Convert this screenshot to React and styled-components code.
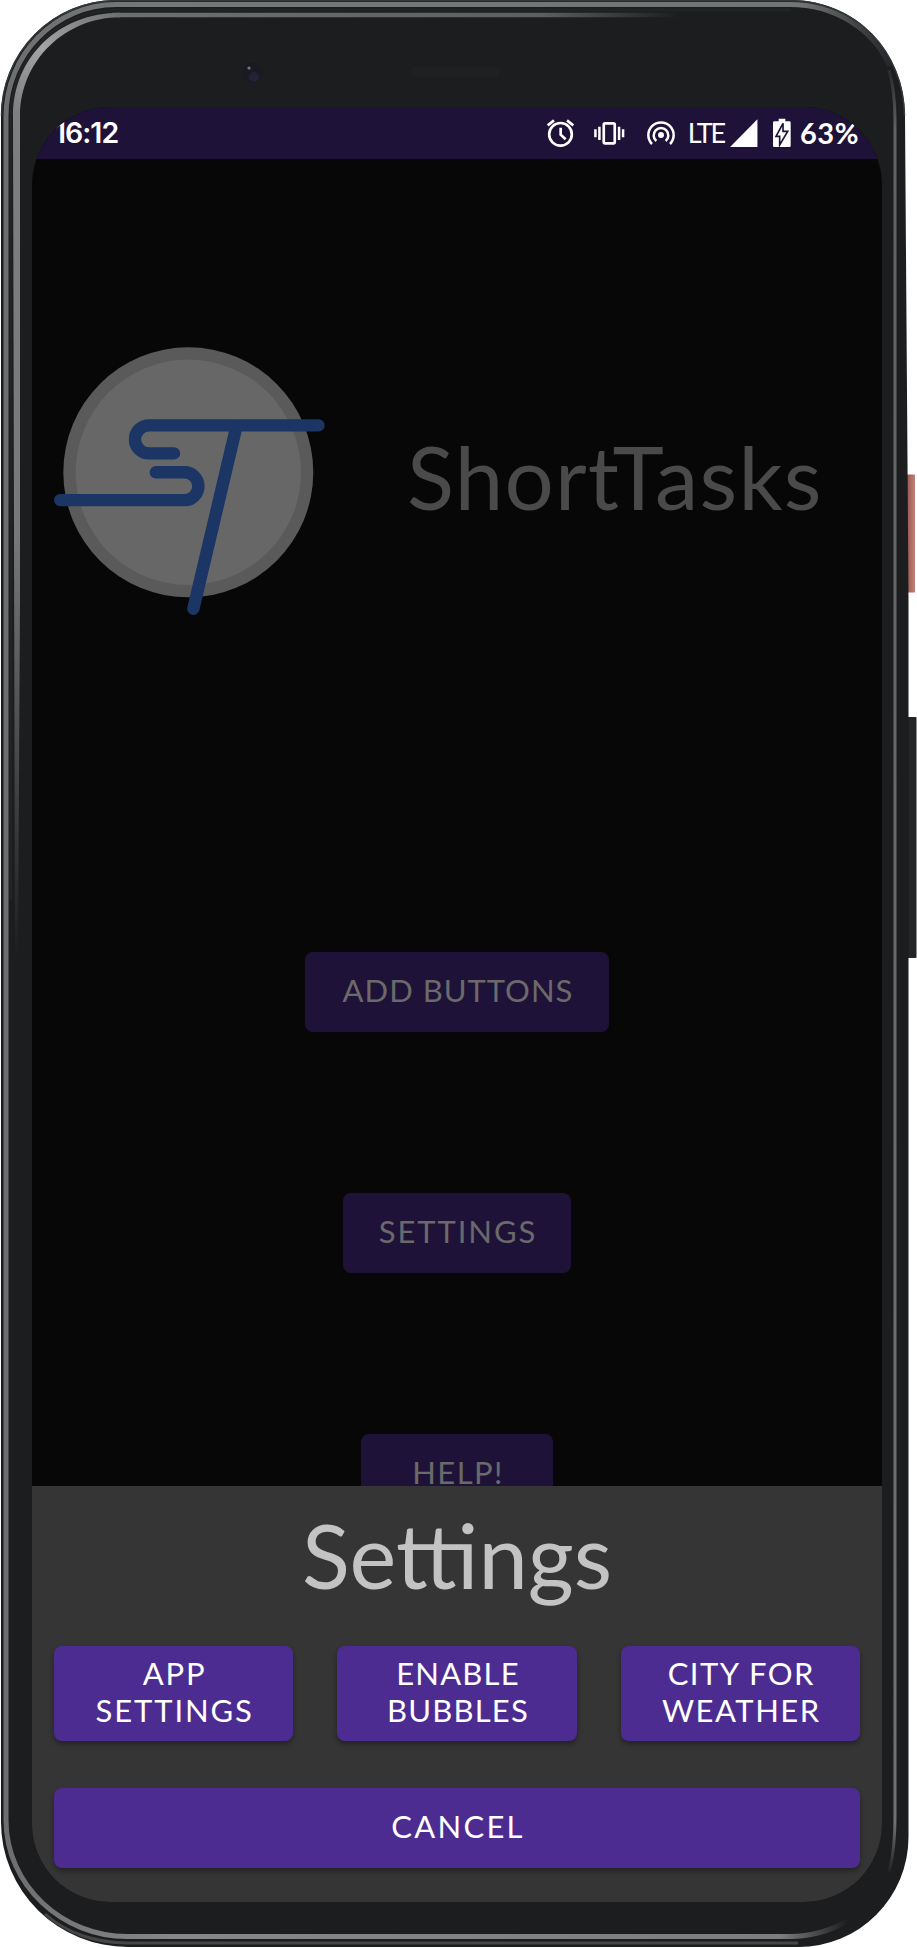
import React from "react";
import styled, { createGlobalStyle } from "styled-components";

const GlobalStyle = createGlobalStyle`
  * { box-sizing: border-box; }
  html, body { margin: 0; padding: 0; background: #ffffff; overflow: hidden; }
`;

const Device = styled.div`
  position: relative;
  width: 917px;
  height: 1948px;
  padding: 107px 35px 46px 32px;
  font-family: Lato, "Open Sans", sans-serif;
`;

const ShellArt = styled.svg`
  position: absolute;
  inset: 0;
  width: 917px;
  height: 1948px;
`;

const Screen = styled.div`
  position: relative;
  display: flex;
  flex-direction: column;
  width: 850px;
  height: 1795px;
  border-radius: 78px;
  overflow: hidden;
  background: #070707;
`;

const StatusBar = styled.header`
  display: flex;
  align-items: center;
  flex: 0 0 52px;
  padding: 0 23px 0 22px;
  background: #1f1238;
  color: #ffffff;
`;

const StatusText = styled.span`
  width: ${(p) => p.$width}px;
  margin-left: ${(p) => p.$gap || 0}px;
  font-size: ${(p) => p.$size || 29}px;
  font-weight: ${(p) => p.$weight || 700};
  letter-spacing: ${(p) => p.$spacing || 0}px;
  line-height: 52px;
  white-space: nowrap;
`;

const Clock = styled(StatusText)`
  font-family: Inter, sans-serif;
`;

const StatusIcons = styled.div`
  display: flex;
  align-items: center;
  margin-left: auto;
`;

const Glyph = styled.svg`
  display: block;
  height: 32px;
  width: ${(p) => p.$width}px;
  margin-left: ${(p) => p.$gap || 0}px;
`;

const Home = styled.main`
  display: flex;
  flex-direction: column;
  flex: 0 0 1327px;
  overflow: hidden;
`;

const Brand = styled.div`
  display: flex;
  align-items: flex-start;
  flex: none;
  height: 793px;
  padding: 188px 0 0 22px;
`;

const Logo = styled.svg`
  display: block;
  flex: none;
  width: 272px;
  height: 268px;
`;

const AppName = styled.h1`
  margin: 75px 0 0 81px;
  color: #4a4a4a;
  font-size: 87px;
  font-weight: 400;
  line-height: 110px;
  letter-spacing: 1.2px;
  white-space: nowrap;
`;

const HomeActions = styled.nav`
  display: flex;
  flex-direction: column;
  align-items: center;
  gap: 161px;
`;

const Button = styled.button`
  display: flex;
  align-items: center;
  justify-content: center;
  flex: none;
  width: ${(p) => p.$width || "100%"};
  height: ${(p) => p.$height || 80}px;
  padding: 0 0 3px 2px;
  border: 0;
  border-radius: 8px;
  background: ${(p) => (p.$dim ? "#1f1238" : "#4c2c91")};
  box-shadow: ${(p) => (p.$dim ? "none" : "0 3px 5px rgba(0, 0, 0, 0.36)")};
  color: ${(p) => (p.$dim ? "#6a6a6a" : "#ffffff")};
  font-family: inherit;
  font-size: 31px;
  font-weight: 400;
  line-height: 37px;
  letter-spacing: ${(p) => p.$spacing || 2.3}px;
  text-align: center;
  text-transform: uppercase;
`;

const Sheet = styled.section`
  display: flex;
  flex-direction: column;
  flex: 1;
  padding: 0 22px;
  background: #353535;
`;

const SheetTitle = styled.h2`
  height: 159.5px;
  margin: 0;
  padding-top: 14px;
  color: #c3c3c3;
  font-size: 88.5px;
  font-weight: 400;
  line-height: 110px;
  text-align: center;
`;

const SheetGrid = styled.div`
  display: grid;
  grid-template-columns: repeat(3, 1fr);
  column-gap: 44px;
  margin-bottom: 47.5px;
`;

function Shell() {
  return (
    <ShellArt viewBox="0 0 917 1948" fill="none">
      <defs>
        <linearGradient id="topInner" gradientUnits="userSpaceOnUse" x1="120" y1="0" x2="680" y2="0">
          <stop offset="0" stopColor="#6d6f70" />
          <stop offset="0.75" stopColor="#5d5f60" />
          <stop offset="1" stopColor="#1c1d1f" />
        </linearGradient>
        <linearGradient id="leftInner" gradientUnits="userSpaceOnUse" x1="0" y1="110" x2="0" y2="960">
          <stop offset="0" stopColor="#7d7f82" />
          <stop offset="0.5" stopColor="#77787a" />
          <stop offset="1" stopColor="#1c1d1f" />
        </linearGradient>
        <linearGradient id="corner" gradientUnits="userSpaceOnUse" x1="17" y1="115" x2="120" y2="15">
          <stop offset="0" stopColor="#7d7f82" />
          <stop offset="0.45" stopColor="#a2a4a5" />
          <stop offset="1" stopColor="#6d6f70" />
        </linearGradient>
        <linearGradient id="topOuter" gradientUnits="userSpaceOnUse" x1="5" y1="0" x2="890" y2="0">
          <stop offset="0" stopColor="#6c6e70" />
          <stop offset="0.15" stopColor="#757878" />
          <stop offset="0.9" stopColor="#727575" />
          <stop offset="1" stopColor="#25272a" />
        </linearGradient>
        <linearGradient id="rightEdge" gradientUnits="userSpaceOnUse" x1="0" y1="75" x2="0" y2="1875">
          <stop offset="0" stopColor="#2b2d2f" />
          <stop offset="0.03" stopColor="#606264" />
          <stop offset="0.97" stopColor="#707274" />
          <stop offset="1" stopColor="#1c1d1f" />
        </linearGradient>
        <linearGradient id="bottomEdge" gradientUnits="userSpaceOnUse" x1="6" y1="0" x2="848" y2="0">
          <stop offset="0" stopColor="#6c6e70" />
          <stop offset="0.2" stopColor="#858788" />
          <stop offset="0.92" stopColor="#7b7d7e" />
          <stop offset="1" stopColor="#1c1d1f" />
        </linearGradient>
        <linearGradient id="power" x1="0" y1="0" x2="1" y2="0">
          <stop offset="0" stopColor="#54211c" />
          <stop offset="0.4" stopColor="#a35f58" />
          <stop offset="1" stopColor="#bd827a" />
        </linearGradient>
      </defs>
      <rect x="904" y="474.5" width="11" height="118" fill="url(#power)" />
      <rect x="904" y="717" width="12.5" height="241" rx="1" fill="#232527" />
      <path
        d="M1 116A115 116 0 0 1 116 0H790C856 0 905 52 905 116L908.5 600V1837A110 110 0 0 1 798 1947H128A127 125 0 0 1 1 1822Z"
        fill="#1c1d1f"
      />
      <path
        d="M1.5 116A115 115 0 0 1 116 .7H790C856 .7 904 52 904.5 116"
        stroke="#34383a"
        strokeWidth="1.5"
      />
      <path
        d="M6 1820V116C6 55 55 4.5 116 4.5H790C835 4.5 873 29 890 66"
        stroke="url(#topOuter)"
        strokeWidth="5"
      />
      <path d="M10.8 900V116C10.8 58 58 10 116 10H790" stroke="#202425" strokeWidth="3" />
      <path d="M112 15H680" stroke="url(#topInner)" strokeWidth="4.4" />
      <path d="M13 116C13 58 58 12.8 120 12.8V17.2C66 17.2 20 60 20 116Z" fill="url(#corner)" />
      <path d="M13 114H20V600L18 960H15Z" fill="url(#leftInner)" />
      <path
        d="M6 1820C6 1886 63 1936.5 127 1936.5H790C811 1936.5 830 1931 848 1921"
        stroke="url(#bottomEdge)"
        strokeWidth="5"
      />
      <path d="M45 1914C65 1932 94 1943 128 1943H798" stroke="#444648" strokeWidth="3" />
      <path d="M889 70C893 84 895 100 895 120V1815C895 1838 894 1854 889 1872" stroke="url(#rightEdge)" strokeWidth="3" />
      <circle cx="253" cy="73" r="10" fill="#191a22" />
      <circle cx="254" cy="77" r="5" fill="#242235" />
      <circle cx="249" cy="68" r="1.6" fill="#777983" />
      <rect x="410" y="66" width="90" height="11" rx="5.5" fill="#1f2022" />
    </ShellArt>
  );
}

function AlarmIcon() {
  return (
    <Glyph $width={27} viewBox="268 350 81 96" fill="none" stroke="#fff">
      <circle cx="308.5" cy="402" r="34" strokeWidth="8" />
      <path d="M270 375L289 360M347 375L328 360" strokeWidth="8" />
      <path d="M309 382V403L324 417" strokeWidth="8" />
    </Glyph>
  );
}

function VibrateIcon() {
  return (
    <Glyph $width={30.5} $gap={20.5} viewBox="411 350 91 96" fill="none" stroke="#fff">
      <rect x="440" y="369" width="33" height="60" rx="4" strokeWidth="8" />
      <path d="M415 387V411M498 387V411M427 379V419M486 379V419" strokeWidth="7.5" />
    </Glyph>
  );
}

function HotspotIcon() {
  return (
    <Glyph $width={28} $gap={22} viewBox="568 350 84 96" fill="none" stroke="#fff">
      <circle cx="610" cy="404" r="9" fill="#fff" stroke="none" />
      <path d="M583 431A38 38 0 1 1 637 431" strokeWidth="7.5" />
      <path d="M596 422A22 22 0 1 1 624 422" strokeWidth="7.5" />
    </Glyph>
  );
}

function SignalIcon() {
  return (
    <Glyph $width={27.5} $gap={5.5} viewBox="820 350 82 96">
      <path d="M820 440L902 357V440Z" fill="#fff" />
    </Glyph>
  );
}

function BatteryIcon() {
  return (
    <Glyph $width={17.7} $gap={15.6} viewBox="949 350 53 96">
      <path d="M966 355H986V363H998Q1002 363 1002 367V436Q1002 440 998 440H953Q949 440 949 436V367Q949 363 953 363H966Z" fill="#fff" />
      <path d="M979 369L958 408H969V434L993 393H979Z" fill="#fff" stroke="#1f1238" strokeWidth="5" />
    </Glyph>
  );
}

function ShortTasksLogo() {
  return (
    <Logo viewBox="54 347 272 268" fill="none">
      <circle cx="188.3" cy="472.3" r="125" fill="#5a5a5a" />
      <circle cx="188.3" cy="472.3" r="112.7" fill="#676767" />
      <g stroke="#1b3564" strokeWidth="12.4" strokeLinecap="round">
        <path d="M318.5 425.4H149A14 14 0 0 0 149 453.4H174" />
        <path d="M155.8 472.3H184.5A13.9 13.9 0 0 1 184.5 500.1H60.2" />
        <path d="M236.3 427L193.4 608.7" />
      </g>
    </Logo>
  );
}

export default function App() {
  return (
    <>
      <GlobalStyle />
      <Device>
        <Shell />
        <Screen>
          <StatusBar>
            <Clock $width={70} $size={28.5} $weight={600} $spacing={-1}>16:12</Clock>
            <StatusIcons>
              <AlarmIcon />
              <VibrateIcon />
              <HotspotIcon />
              <StatusText $width={37} $gap={13} $size={27} $weight={400} $spacing={-2.3}>LTE</StatusText>
              <SignalIcon />
              <BatteryIcon />
              <StatusText $width={59} $gap={9} $spacing={0.5}>63%</StatusText>
            </StatusIcons>
          </StatusBar>
          <Home>
            <Brand>
              <ShortTasksLogo />
              <AppName>ShortTasks</AppName>
            </Brand>
            <HomeActions>
              <Button $dim $width="304px" $spacing={1}>Add buttons</Button>
              <Button $dim $width="228px" $spacing={1.9}>Settings</Button>
              <Button $dim $width="192px" $spacing={1.4}>Help!</Button>
            </HomeActions>
          </Home>
          <Sheet>
            <SheetTitle>Settings</SheetTitle>
            <SheetGrid>
              <Button $height={95} $spacing={1.9}>App<br />settings</Button>
              <Button $height={95} $spacing={1.2}>Enable<br />bubbles</Button>
              <Button $height={95} $spacing={1.5}>City for<br />weather</Button>
            </SheetGrid>
            <Button>Cancel</Button>
          </Sheet>
        </Screen>
      </Device>
    </>
  );
}
